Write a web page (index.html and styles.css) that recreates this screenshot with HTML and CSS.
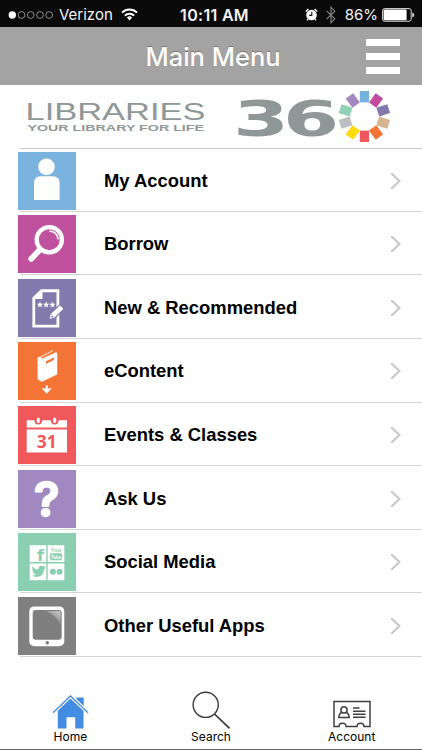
FILE: index.html
```html
<!DOCTYPE html>
<html lang="en">
<head>
    <meta charset="UTF-8">
    <meta name="viewport" content="width=device-width, initial-scale=1.0">
    <title>Main Menu</title>
    <link rel="stylesheet" href="styles.css">
</head>
<body>
    <div class="status">
        <div class="carrier">
            <svg width="46" height="10" viewBox="0 0 46 10" fill="none" stroke="#aaa" stroke-width="0.8">
                <circle cx="4.3" cy="5" r="3.7" fill="#fff" stroke="none"/>
                <circle cx="13.5" cy="5" r="3.4"/>
                <circle cx="22.7" cy="5" r="3.4"/>
                <circle cx="32" cy="5" r="3.4"/>
                <circle cx="41.2" cy="5" r="3.4"/>
            </svg>
            <span class="carrier-name">Verizon</span>
            <svg width="17" height="13" viewBox="0 0 17 13" fill="none" stroke="#fff" stroke-width="2">
                <path d="M1 4.6a10.6 10.6 0 0 1 15 0M3.8 7.6a6.6 6.6 0 0 1 9.4 0"/>
                <path d="M8.5 12.4L5.9 9.6a3.7 3.7 0 0 1 5.2 0z" fill="#fff" stroke="none"/>
            </svg>
        </div>
        <div class="time">10:11 AM</div>
        <div class="power">
            <svg width="13" height="13" viewBox="0 0 13 13">
                <circle cx="6.5" cy="7" r="5.3" fill="#fff"/>
                <path d="M.8 3.4L3.4 1M12.2 3.4L9.6 1M3 11l-1 1.4M10 11l1 1.4" stroke="#fff" stroke-width="1.3"/>
                <path d="M6.8 3.8v3.6H4.2" fill="none" stroke="#0a0a0a" stroke-width="1.1"/>
            </svg>
            <svg class="bluetooth" width="10" height="18" viewBox="0 0 10 18" fill="none" stroke="#858585" stroke-width="1.1">
                <path d="M.6 4.8l8.2 8L5 16.8V1.2l3.8 4-8.2 8"/>
            </svg>
            <span class="percent">86%</span>
            <svg width="33" height="14" viewBox="0 0 33 14">
                <rect x=".6" y=".6" width="28.6" height="12.6" rx="2" fill="none" stroke="#ddd"/>
                <rect x="1.6" y="1.6" width="23" height="10.6" rx="1" fill="#fff"/>
                <path d="M30.3 4.6q2 .6 2 2.4t-2 2.4z" fill="#ddd"/>
            </svg>
        </div>
    </div>

    <div class="header">
        <h1>Main Menu</h1>
        <div class="menu-button">
            <span></span>
            <span></span>
            <span></span>
        </div>
    </div>

    <div class="logo">
        <svg width="422" height="63" viewBox="0 85 422 63" fill="#8f9897">
            <text class="logo-name" x="25.5" y="119.5" textLength="180" lengthAdjust="spacingAndGlyphs">LIBRARIES</text>
            <text class="logo-line" x="27.5" y="131" textLength="176.5" lengthAdjust="spacingAndGlyphs">YOUR LIBRARY FOR LIFE</text>
            <text class="logo-number" x="145.6" y="136.4" transform="scale(1.6 1)">36</text>
            <g transform="translate(364.4 116.5)">
                <rect x="-4.6" y="-25.5" width="9.2" height="11.4" fill="#74b2df"/>
                <rect x="-4.6" y="-25.5" width="9.2" height="11.4" fill="#c14b9f" transform="rotate(36)"/>
                <rect x="-4.6" y="-25.5" width="9.2" height="11.4" fill="#8278ad" transform="rotate(72)"/>
                <rect x="-4.6" y="-25.5" width="9.2" height="11.4" fill="#d6b58e" transform="rotate(108)"/>
                <rect x="-4.6" y="-25.5" width="9.2" height="11.4" fill="#f37435" transform="rotate(144)"/>
                <rect x="-4.6" y="-25.5" width="9.2" height="11.4" fill="#f0585f" transform="rotate(180)"/>
                <rect x="-4.6" y="-25.5" width="9.2" height="11.4" fill="#fedb0b" transform="rotate(216)"/>
                <rect x="-4.6" y="-25.5" width="9.2" height="11.4" fill="#bbbfc0" transform="rotate(252)"/>
                <rect x="-4.6" y="-25.5" width="9.2" height="11.4" fill="#8fd2b5" transform="rotate(288)"/>
                <rect x="-4.6" y="-25.5" width="9.2" height="11.4" fill="#a287c0" transform="rotate(324)"/>
            </g>
        </svg>
    </div>

    <div class="menu">
        <div class="item">
            <svg class="tile blue" viewBox="0 0 58 58" fill="#fff">
                <circle cx="28.5" cy="14.8" r="8.3"/>
                <path d="M16 48V31q0-6.8 6.8-6.8h12q6.8 0 6.8 6.8v17z"/>
            </svg>
            <span class="label">My Account</span>
            <svg class="arrow" viewBox="0 0 12 18"><path d="M1.3 1.3L9.5 9l-8.2 7.7"/></svg>
        </div>
        <div class="item">
            <svg class="tile pink" viewBox="0 0 58 58" fill="none" stroke="#fff">
                <circle cx="31.3" cy="24.7" r="12.6" stroke-width="4.3"/>
                <path d="M22 34.5l-8.7 9.3" stroke-width="5.8" stroke-linecap="round"/>
                <path d="M31.3 16q8 .5 8.8 8.5" stroke-width="1.5"/>
            </svg>
            <span class="label">Borrow</span>
            <svg class="arrow" viewBox="0 0 12 18"><path d="M1.3 1.3L9.5 9l-8.2 7.7"/></svg>
        </div>
        <div class="item">
            <svg class="tile violet" viewBox="0 0 58 58" fill="#fff">
                <path fill-rule="evenodd" d="M23 10.3h18.3v38.3H14.4V18.5zM24.5 13.2v6.7h-7.3v25.8h21.3V13.2z"/>
                <path d="M22 22.6l.9 2.1 2.2.1-1.7 1.5.6 2.2-2-1.2-2 1.2.6-2.2-1.7-1.5 2.2-.1z"/>
                <path d="M28.2 22.6l.9 2.1 2.2.1-1.7 1.5.6 2.2-2-1.2-2 1.2.6-2.2-1.7-1.5 2.2-.1z"/>
                <path d="M34.4 22.6l.9 2.1 2.2.1-1.7 1.5.6 2.2-2-1.2-2 1.2.6-2.2-1.7-1.5 2.2-.1z"/>
                <path d="M30.8 40.8l1.4-6L42 25.6l4.2 4.3-9.6 9.3z" stroke="#8279ad" stroke-width="1.2"/>
                <path d="M34 36.2l1.8 1.8-2.9.8z" fill="#8279ad"/>
            </svg>
            <span class="label">New &amp; Recommended</span>
            <svg class="arrow" viewBox="0 0 12 18"><path d="M1.3 1.3L9.5 9l-8.2 7.7"/></svg>
        </div>
        <div class="item">
            <svg class="tile orange" viewBox="0 0 58 58" fill="#fff">
                <path d="M19.6 15.6L35 8v1.5l-12.4 6.2 2 .9L38 10.2l1.2.8v21.4l-15.4 7.4-4.2-2.6z"/>
                <path d="M21.4 14.9L35.8 8.9" stroke="#f37435" stroke-width=".7"/>
                <path d="M28 19.2l8-3.7v2.6l-8 3.7z" fill="#f37435"/>
                <path d="M27.7 43.4h2v3.3l4.3-.8-5.3 5.8-5.2-5.8 4.2.8z"/>
            </svg>
            <span class="label">eContent</span>
            <svg class="arrow" viewBox="0 0 12 18"><path d="M1.3 1.3L9.5 9l-8.2 7.7"/></svg>
        </div>
        <div class="item">
            <svg class="tile red" viewBox="0 0 58 58" fill="#fff">
                <path d="M8.7 14.2H49v7.2H8.7zM8.7 23.6H49v23H8.7z"/>
                <g fill="#f0585b">
                    <rect x="16.6" y="10.5" width="7.4" height="8" rx="3.4"/>
                    <rect x="33" y="10.5" width="7.4" height="8" rx="3.4"/>
                </g>
                <g>
                    <rect x="18.8" y="11.4" width="3" height="5.6" rx="1.5"/>
                    <rect x="35.2" y="11.4" width="3" height="5.6" rx="1.5"/>
                </g>
                <text class="date" x="28.7" y="41.7">31</text>
            </svg>
            <span class="label">Events &amp; Classes</span>
            <svg class="arrow" viewBox="0 0 12 18"><path d="M1.3 1.3L9.5 9l-8.2 7.7"/></svg>
        </div>
        <div class="item">
            <svg class="tile purple" viewBox="0 0 58 58" fill="#fff">
                <text class="question" x="28.6" y="45.8">?</text>
            </svg>
            <span class="label">Ask Us</span>
            <svg class="arrow" viewBox="0 0 12 18"><path d="M1.3 1.3L9.5 9l-8.2 7.7"/></svg>
        </div>
        <div class="item">
            <svg class="tile green" viewBox="0 0 58 58" fill="#fff">
                <path d="M11.7 12.2h16.6V29H11.7zM29.7 12.2h16.6V29H29.7zM11.7 30.4h16.6v16.8H11.7zM29.7 30.4h16.6v16.8H29.7z"/>
                <g fill="#8bcfb3">
                    <text class="facebook" x="22.5" y="27.5">f</text>
                    <text class="you" x="38" y="19.2">You</text>
                    <rect x="32" y="20.2" width="12" height="7" rx="1.6"/>
                    <text class="tube" x="38" y="25.6">Tube</text>
                    <path d="M14 33.5q3 3 6.2 3 .2-3.800 3.400-3.800 1.400 0 2.100.9l2-.7-1.400 2 1.300-.1-1.500 1.500q-.2 7.200-7.400 7.700-2.700.1-5-1.400 2.500.1 4-1.200-2-.3-2.600-2h1.200q-2.100-.9-2.200-3l1.200.3q-1.900-1.400-1.300-3.200z"/>
                    <circle cx="34.9" cy="38.8" r="3"/>
                    <circle cx="41.5" cy="38.8" r="3"/>
                </g>
            </svg>
            <span class="label">Social Media</span>
            <svg class="arrow" viewBox="0 0 12 18"><path d="M1.3 1.3L9.5 9l-8.2 7.7"/></svg>
        </div>
        <div class="item">
            <svg class="tile gray" viewBox="0 0 58 58">
                <defs>
                    <linearGradient id="shine" x1="1" y1="0" x2=".4" y2=".7">
                        <stop offset="0" stop-color="#d0d0d0"/>
                        <stop offset="1" stop-color="#808080"/>
                    </linearGradient>
                </defs>
                <rect x="11.3" y="9.4" width="35" height="39.8" rx="5" fill="#fff"/>
                <rect x="14.7" y="13" width="29" height="29.7" rx="3" fill="#7f7f7f"/>
                <path d="M27.5 14h13q2.2 0 2.2 2.2v12q-4-9.700-15.200-14.200z" fill="url(#shine)"/>
                <circle cx="29.3" cy="45.8" r="1.7" fill="#777"/>
            </svg>
            <span class="label">Other Useful Apps</span>
            <svg class="arrow" viewBox="0 0 12 18"><path d="M1.3 1.3L9.5 9l-8.2 7.7"/></svg>
        </div>
    </div>

    <div class="tabs">
        <div class="tab">
            <svg width="38" height="38" viewBox="0 0 38 38" fill="#448ce2">
                <path d="M25.5 6.5h7.2v8.5l-7.2-6.8z"/>
                <path d="M19.5 7.5L6.8 19.8v17.7h8.7V26.3h8.7v11.2h8.3V19.8z"/>
                <path d="M2 21.8L19.5 5 37 21.8" fill="none" stroke="#fff" stroke-width="3"/>
                <path d="M2 21.8L19.5 5 37 21.8" fill="none" stroke="#448ce2" stroke-width="1.3"/>
            </svg>
            <span>Home</span>
        </div>
        <div class="tab">
            <svg width="38" height="38" viewBox="0 0 38 38" fill="none" stroke="#3a3a3a" stroke-width="1.4">
                <circle cx="13.7" cy="13.8" r="12.6"/>
                <path d="M22.5 23L37.5 37.3" stroke-width="1.7"/>
            </svg>
            <span>Search</span>
        </div>
        <div class="tab">
            <svg width="38" height="38" viewBox="0 0 38 38" fill="none" stroke="#404040" stroke-width="1.5">
                <path d="M1 10.5h36v25h-6q0-3.200-3.500-3.200T24 35.500H13q0-3.200-3.500-3.200T6 35.500H1z"/>
                <circle cx="11" cy="18.9" r="3.1"/>
                <path d="M9 21.500q-2.800.6-3.300 5h10.600q-.5-4.400-3.300-5M20 17h6.500M20 20.300h12.500M20 23.300h12.500M20 26.300h12.500"/>
            </svg>
            <span>Account</span>
        </div>
    </div>
</body>
</html>
```

FILE: styles.css
```css
* {
    box-sizing: border-box;
}
body {
    margin: 0;
    height: 750px;
    display: flex;
    flex-direction: column;
    overflow: hidden;
    background-color: #fefefe;
    color: #000;
    font-family: "Liberation Sans", Arial, Helvetica, sans-serif;
    border-bottom: 1px solid #666;
}
svg {
    display: block;
    flex: none;
}
.status {
    height: 27px;
    flex: none;
    display: grid;
    grid-template-columns: 150px 1fr 150px;
    align-items: center;
    padding: 2px 7px 0 8px;
    background-color: #0a0a0a;
    color: #f4f4f4;
    font-family: Inter, sans-serif;
    font-size: 15px;
}
.carrier, .power {
    display: flex;
    align-items: center;
}
.carrier-name {
    width: 55px;
    margin: 0 7px 0 5px;
}
.time {
    padding-left: 6px;
    font-weight: 600;
    font-size: 16px;
    letter-spacing: 0.3px;
    text-align: center;
    white-space: nowrap;
}
.power {
    justify-content: flex-end;
}
.bluetooth {
    margin: 0 9px 0 8px;
}
.percent {
    margin-right: 4px;
}
.header {
    height: 58px;
    flex: none;
    display: grid;
    grid-template-columns: 60px 1fr 60px;
    align-items: center;
    background-color: #a3a3a3;
}
h1 {
    grid-column: 2;
    margin: 0;
    padding-left: 4px;
    color: #fff;
    font-family: Inter, sans-serif;
    font-size: 25.5px;
    font-weight: 500;
    text-align: center;
    text-shadow: 0 -1px 0 #777;
}
.menu-button {
    display: flex;
    flex-direction: column;
    gap: 7px;
    width: 34px;
    margin-left: 4px;
}
.menu-button span {
    height: 7px;
    background-color: #fff;
}
.logo {
    height: 63px;
    flex: none;
}
.logo-name {
    font-family: "Liberation Sans", sans-serif;
    font-size: 23.5px;
}
.logo-line {
    font-size: 9.5px;
    font-weight: bold;
}
.logo-number {
    font-family: "DejaVu Sans", sans-serif;
    font-size: 50.5px;
    font-weight: bold;
    letter-spacing: -3.8px;
}
.menu {
    flex: none;
    height: 510px;
    display: grid;
    grid-template-rows: repeat(8, 63.65px);
    padding-left: 18px;
    background: linear-gradient(#c8c8c8, #c8c8c8) 20px 0 / 100% 1px no-repeat;
}
.item {
    display: flex;
    align-items: center;
    padding: 1.5px 20px 0 0;
    background: linear-gradient(#d6d6d6, #d6d6d6) 2px 100% / 100% 1px no-repeat;
}
.tile {
    width: 58px;
    height: 58px;
    margin-right: 28px;
}
.blue { background-color: #7bb3df; }
.pink { background-color: #c0519f; }
.violet { background-color: #8279ad; }
.orange { background-color: #f37435; }
.red { background-color: #f0585b; }
.purple { background-color: #a188c0; }
.green { background-color: #8bcfb3; }
.gray { background-color: #808080; }
.label {
    flex: 1;
    font-size: 18.4px;
    font-weight: bold;
}
.arrow {
    width: 12px;
    height: 18px;
    fill: none;
    stroke: #c5c5ca;
    stroke-width: 1.9;
}
.date, .question, .facebook, .you, .tube {
    text-anchor: middle;
    font-weight: bold;
}
.date {
    fill: #f0585b;
    font-family: "Open Sans", sans-serif;
    font-size: 17.5px;
}
.question {
    font-family: Inter, sans-serif;
    font-size: 47px;
    font-weight: 500;
    stroke: #fff;
    stroke-width: 2.6;
    stroke-linejoin: round;
}
.facebook {
    font-family: "DejaVu Sans", sans-serif;
    font-size: 16px;
}
.you {
    font-size: 6px;
}
.tube {
    fill: #fff;
    font-size: 4.5px;
}
.tabs {
    flex: 1;
    display: grid;
    grid-template-columns: repeat(3, 1fr);
    align-items: end;
    padding-bottom: 5px;
}
.tab {
    display: flex;
    flex-direction: column;
    align-items: center;
    gap: 1px;
    font-family: Inter, sans-serif;
    font-size: 12px;
    line-height: 14px;
}
```
